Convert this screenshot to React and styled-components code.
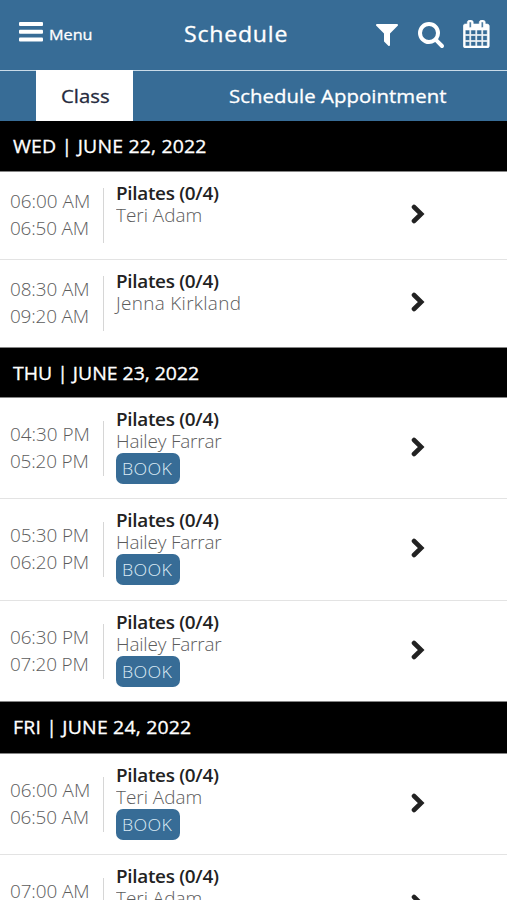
import React from "react";
import styled, { createGlobalStyle } from "styled-components";

const BLUE = "#376c96";

const GlobalStyle = createGlobalStyle`
  * { box-sizing: border-box; }
  html, body { margin: 0; background: #fff; overflow: hidden; }
  body { font-family: "Open Sans", "Noto Sans", sans-serif; }
`;

const Screen = styled.main`
  width: 507px;
  height: 900px;
  overflow: hidden;
  background: #fff;
`;

const Label = styled.span`
  display: block;
  width: max-content;
  white-space: nowrap;
  font-size: ${(p) => p.$size || 17.5}px;
  font-weight: ${(p) => p.$weight || 500};
  letter-spacing: ${(p) => p.$track || 0}px;
  transform: scaleX(${(p) => p.$stretch || 1.08});
  transform-origin: left center;
  -webkit-text-stroke: ${(p) => (p.$weight ? 0 : 0.3)}px currentColor;
`;

const TopBar = styled.header`
  display: grid;
  grid-template-columns: 184px 192px 1fr;
  height: 71px;
  padding-bottom: 2px;
  background: ${BLUE};
  border-bottom: 1.5px solid #c9dbe8;
  color: #fff;
`;

const MenuButton = styled.button`
  display: flex;
  align-items: flex-start;
  gap: 5.5px;
  padding: 22px 0 0 19px;
  border: 0;
  background: none;
  color: inherit;
  font-family: inherit;
  text-align: left;
`;

const MenuLabel = styled(Label)`
  line-height: 24px;
`;

const Title = styled.h1`
  margin: 20px 0 0;
  line-height: 28px;
`;

const Actions = styled.nav`
  display: flex;
  align-items: flex-start;
  gap: 19.5px;
  padding-top: 20px;
`;

const ActionIcon = styled.svg`
  display: block;
  flex: none;
  width: ${(p) => p.$w}px;
  height: ${(p) => p.$h}px;
  margin-top: ${(p) => p.$top || 0}px;
  fill: #fff;
  stroke: #fff;
  stroke-width: ${(p) => p.$stroke || 0};
`;

const Tabs = styled.div`
  display: flex;
  height: 50px;
  padding-left: 36px;
  background: ${BLUE};
`;

const Tab = styled.div`
  width: ${(p) => p.$width}px;
  padding-left: ${(p) => p.$inset}px;
  padding-top: 12px;
  line-height: 26px;
  background: ${(p) => (p.$active ? "#fff" : "transparent")};
  color: ${(p) => (p.$active ? "#252a3d" : "#fff")};
  ${(p) => p.$active && "margin-top: -1px; padding-top: 13px;"}
`;

const DayHeader = styled.h2`
  height: ${(p) => p.$height}px;
  margin: 0;
  padding: 12px 0 0 13px;
  line-height: 26px;
  background: #000;
  border-bottom: 1px solid #858585;
  color: #fff;
`;

const ClassRow = styled.article`
  display: grid;
  grid-template-columns: 104px 307px 1fr;
  align-items: center;
  height: ${(p) => p.$height}px;
  border-bottom: 1px solid ${(p) => (p.$last ? "#858585" : "#e3e3e3")};
`;

const Times = styled.div`
  height: 55px;
  padding-left: 10px;
  border-right: 1.5px solid #d6d6d6;
  line-height: 27px;
  color: #5c5c5c;
`;

const Details = styled.div`
  align-self: start;
  padding: 10px 0 0 11.5px;
  line-height: 22px;
`;

const ClassName = styled(Label)`
  color: #222;
`;

const Teacher = styled(Label)`
  color: #5c5c5c;
`;

const BookButton = styled.button`
  display: flex;
  align-items: center;
  width: 64px;
  height: 31px;
  margin-top: 1px;
  padding: 0 0 0 6px;
  border: 0;
  border-radius: 7px;
  background: ${BLUE};
  color: #dcebf5;
  font-family: inherit;
`;

const Chevron = styled.svg`
  display: block;
  width: 14px;
  height: 22px;
  margin-top: -3px;
  fill: none;
  stroke: #222;
  stroke-width: 4.6;
  stroke-linecap: round;
`;

const days = [
  {
    label: "WED | JUNE 22, 2022", track: 0.17, height: 51,
    classes: [
      { start: "06:00 AM", st: 0, end: "06:50 AM", et: -0.16, teacher: "Teri Adam", tt: 0, height: 88 },
      { start: "08:30 AM", st: -0.1, end: "09:20 AM", et: -0.16, teacher: "Jenna Kirkland", tt: 0.3, height: 88 },
    ],
  },
  {
    label: "THU | JUNE 23, 2022", track: -0.02, height: 50,
    classes: [
      { start: "04:30 PM", st: 0, end: "05:20 PM", et: -0.16, teacher: "Hailey Farrar", tt: -0.16, book: true, height: 101 },
      { start: "05:30 PM", st: -0.1, end: "06:20 PM", et: -0.1, teacher: "Hailey Farrar", tt: -0.16, book: true, height: 102 },
      { start: "06:30 PM", st: -0.1, end: "07:20 PM", et: -0.16, teacher: "Hailey Farrar", tt: -0.16, book: true, height: 101 },
    ],
  },
  {
    label: "FRI | JUNE 24, 2022", track: 0.18, height: 52,
    classes: [
      { start: "06:00 AM", st: 0, end: "06:50 AM", et: -0.16, teacher: "Teri Adam", tt: 0, book: true, height: 101 },
      { start: "07:00 AM", st: -0.1, teacher: "Teri Adam", tt: 0, height: 101 },
    ],
  },
];

function ClassItem({ item, last }) {
  return (
    <ClassRow $height={item.height} $last={last}>
      <Times>
        <Label $weight={300} $track={item.st}>{item.start}</Label>
        {item.end && <Label $weight={300} $track={item.et}>{item.end}</Label>}
      </Times>
      <Details>
        <ClassName $weight={600} $track={-0.28}>Pilates (0/4)</ClassName>
        <Teacher $weight={300} $track={item.tt}>{item.teacher}</Teacher>
        {item.book && (
          <BookButton>
            <Label $size={15.5} $weight={300} $stretch={1.15} $track={0.3}>BOOK</Label>
          </BookButton>
        )}
      </Details>
      <Chevron viewBox="0 0 14 22">
        <path d="M3 4l7.2 7L3 18" />
      </Chevron>
    </ClassRow>
  );
}

export default function App() {
  return (
    <Screen>
      <GlobalStyle />
      <TopBar>
        <MenuButton>
          <ActionIcon $w={24} $h={20} viewBox="0 0 24 20">
            <rect width="24" height="4" rx="1" />
            <rect y="7.8" width="24" height="4" rx="1" />
            <rect y="15.6" width="24" height="4" rx="1" />
          </ActionIcon>
          <MenuLabel $size={15} $stretch={1.08}>Menu</MenuLabel>
        </MenuButton>
        <Title><Label $size={21} $stretch={1.1} $track={0.7}>Schedule</Label></Title>
        <Actions>
          <ActionIcon $w={22} $h={22} $top={4} viewBox="192 256 1408 1408">
            <path d="M1595 295q17 41-14 70l-493 493v742q0 42-39 59-13 5-25 5-27 0-45-19l-256-256q-19-19-19-45v-486l-493-493q-31-29-14-70 17-39 59-39h1280q42 0 59 39z" />
          </ActionIcon>
          <ActionIcon $w={26} $h={26} $top={2} viewBox="64 128 1664 1664">
            <path d="M1216 832q0-185-131.5-316.5t-316.5-131.5-316.5 131.5-131.5 316.5 131.5 316.5 316.5 131.5 316.5-131.5 131.5-316.5zm512 832q0 52-38 90t-90 38q-54 0-90-38l-343-342q-179 124-399 124-143 0-273.5-55.5t-225-150-150-225-55.5-273.5 55.5-273.5 150-225 225-150 273.5-55.5 273.5 55.5 225 150 150 225 55.5 273.5q0 220-124 399l343 343q37 37 37 90z" />
          </ActionIcon>
          <ActionIcon $w={26.5} $h={28} $stroke={36} viewBox="64 0 1664 1792">
            <path d="M192 1664h288v-288h-288v288zm352 0h320v-288h-320v288zm-352-352h288v-320h-288v320zm352 0h320v-320h-320v320zm-352-384h288v-288h-288v288zm736 736h320v-288h-320v288zm-384-736h320v-288h-320v288zm768 736h288v-288h-288v288zm-384-352h320v-320h-320v320zm-352-864v-288q0-13-9.5-22.5t-22.5-9.5h-64q-13 0-22.5 9.5t-9.5 22.5v288q0 13 9.5 22.5t22.5 9.5h64q13 0 22.5-9.5t9.5-22.5zm736 864h288v-320h-288v320zm-384-384h320v-288h-320v288zm384 0h288v-288h-288v288zm32-480v-288q0-13-9.5-22.5t-22.5-9.5h-64q-13 0-22.5 9.5t-9.5 22.5v288q0 13 9.5 22.5t22.5 9.5h64q13 0 22.5-9.5t9.5-22.5zm384-64v1280q0 52-38 90t-90 38h-1408q-52 0-90-38t-38-90v-1280q0-52 38-90t90-38h128v-96q0-66 47-113t113-47h64q66 0 113 47t47 113v96h384v-96q0-66 47-113t113-47h64q66 0 113 47t47 113v96h128q52 0 90 38t38 90z" />
          </ActionIcon>
        </Actions>
      </TopBar>
      <Tabs>
        <Tab $active $width={97} $inset={25}><Label $size={18.5} $stretch={1.1}>Class</Label></Tab>
        <Tab $width={374} $inset={96}><Label $size={18.5} $stretch={1.1} $track={0.05}>Schedule Appointment</Label></Tab>
      </Tabs>
      {days.map((day) => (
        <section key={day.label}>
          <DayHeader $height={day.height}>
            <Label $size={18.5} $stretch={1.05} $track={day.track}>{day.label}</Label>
          </DayHeader>
          {day.classes.map((item, i) => (
            <ClassItem key={item.start} item={item} last={i === day.classes.length - 1} />
          ))}
        </section>
      ))}
    </Screen>
  );
}
